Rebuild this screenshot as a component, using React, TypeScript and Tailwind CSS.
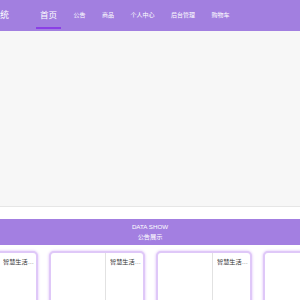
const navItems = ["公告", "商品", "个人中心", "后台管理", "购物车"];

const notices = [
  "智慧生活便民服务上线",
  "智慧生活便民服务上线",
  "智慧生活便民服务上线",
  "智慧生活便民服务上线",
];

export default function App() {
  return (
    <div
      className="h-[300px] w-[300px] overflow-hidden bg-white"
      style={{ fontFamily: '"Liberation Sans", "Noto Sans CJK SC", sans-serif' }}
    >
      {/* header */}
      <div className="flex h-[31px] items-center bg-[#a27fe0] text-white">
        <div className="w-[36px] shrink-0 overflow-hidden">
          <span className="ml-[-9px] block whitespace-nowrap text-[9px]">系统</span>
        </div>
        <div className="flex h-full items-center gap-[8.5px]">
          <div className="relative flex h-full items-center px-[4px]">
            <span className="text-[8.5px]">首页</span>
            <span className="absolute bottom-[2px] left-0 h-[2px] w-full bg-[#8b3fe6]" />
          </div>
          {navItems.map((item) => (
            <div key={item} className="flex h-full items-center px-[4px]">
              <span className="text-[6px]">{item}</span>
            </div>
          ))}
        </div>
      </div>

      {/* banner area */}
      <div className="h-[176px] border-b border-[#e6e6e6] bg-[#f7f7f7]" />
      <div className="h-[12px] bg-white" />

      {/* section title */}
      <div className="flex h-[26px] flex-col items-center bg-[#a37fe1] pt-[3px] text-[6.2px] leading-[9.5px] text-white">
        <span>DATA SHOW</span>
        <span>公告展示</span>
      </div>

      {/* notice cards */}
      <div className="ml-[-58px] mt-[6px] flex gap-[11px]">
        {notices.map((title, i) => (
          <div
            key={i}
            className="flex h-[70px] w-[96px] shrink-0 rounded-[5px] border-2 border-[#dfc8f8] bg-white shadow-[0_0_3px_#dcbcf8]"
          >
            <div className="w-[55px] shrink-0 border-r border-[#e2e2e2]" />
            <div className="min-w-0 flex-1 pl-[4px] pr-[1px] pt-[4px]">
              <p className="truncate text-[6.2px] leading-[9px] text-[#333]">{title}</p>
            </div>
          </div>
        ))}
      </div>
    </div>
  );
}
